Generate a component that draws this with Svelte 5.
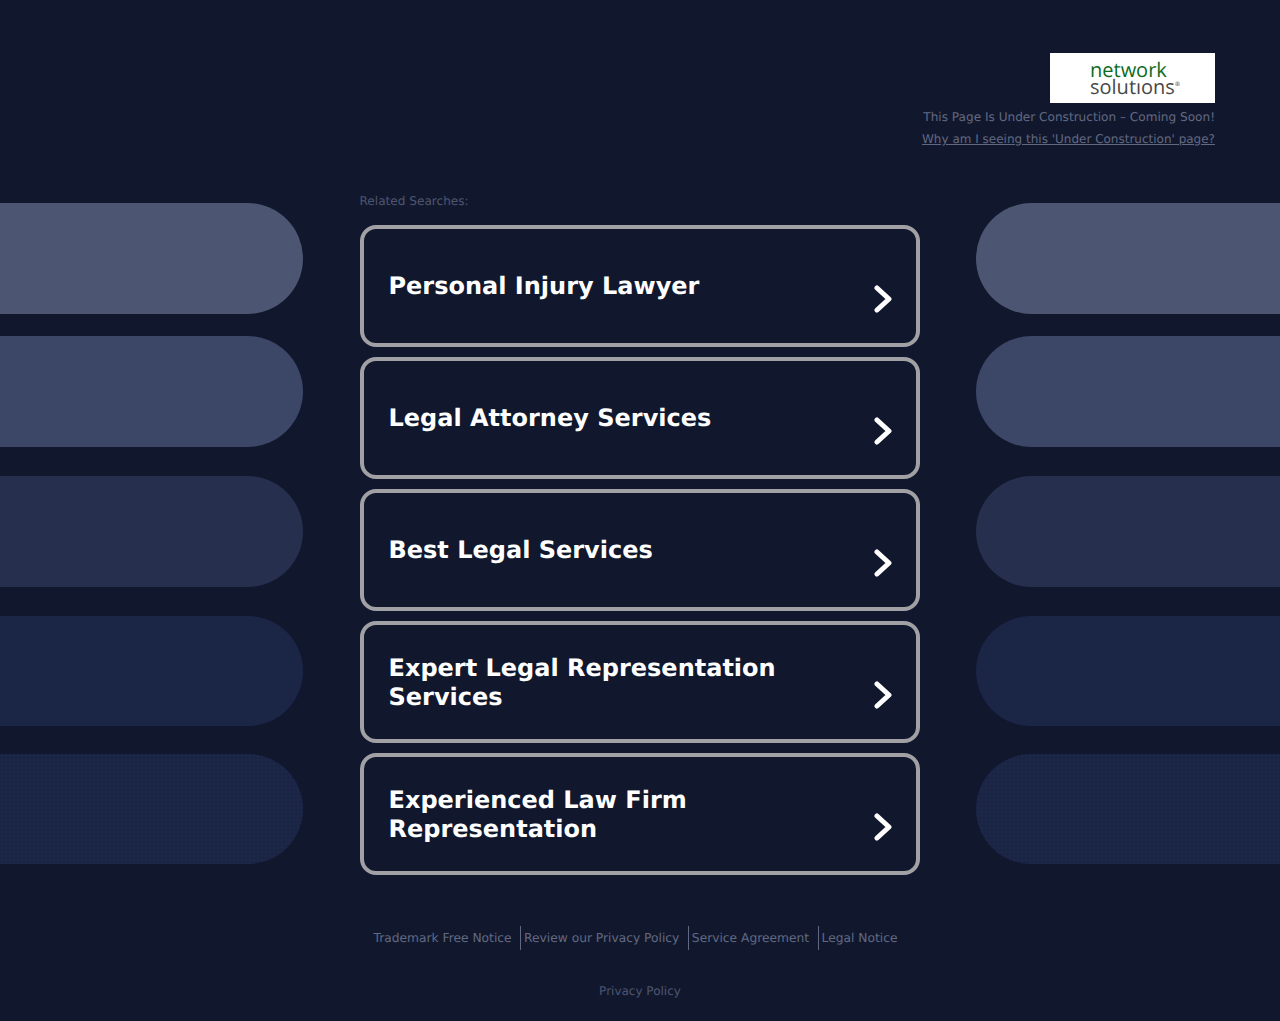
<script>
  const pills = ['p1', 'p2', 'p3', 'p4', 'p5'];
  const searches = [
    'Personal Injury Lawyer',
    'Legal Attorney Services',
    'Best Legal Services',
    'Expert Legal Representation Services',
    'Experienced Law Firm Representation'
  ];
  const links = ['Trademark Free Notice', 'Review our Privacy Policy', 'Service Agreement', 'Legal Notice'];
</script>

<div class="page">
  <header class="top">
    <div class="logo">
      <span class="net">network</span>
      <span class="sol">solutıons<sup>®</sup></span>
    </div>
    <p class="soon">This Page Is Under Construction – Coming Soon!</p>
    <a class="why" href="#why">Why am I seeing this 'Under Construction' page?</a>
  </header>

  <main class="main">
    <div class="side left">
      {#each pills as p}<div class="pill {p}"></div>{/each}
    </div>
    <section class="center">
      <h2 class="related">Related Searches:</h2>
      <div class="list">
        {#each searches as s}
          <a class="item" href="#s">
            <span class="label">{s}</span>
            <svg class="chev" viewBox="0 0 20 28" width="20" height="28" aria-hidden="true">
              <path d="M4 3 L16 14 L4 25" fill="none" stroke="#fff" stroke-width="5" stroke-linecap="round" stroke-linejoin="round" />
            </svg>
          </a>
        {/each}
      </div>
    </section>
    <div class="side right">
      {#each pills as p}<div class="pill {p}"></div>{/each}
    </div>
  </main>

  <footer class="foot">
    <nav class="links">
      {#each links as l}<a href="#l">{l}</a>{/each}
    </nav>
    <a class="policy" href="#p">Privacy Policy</a>
  </footer>
</div>

<style>
  :global(body) {
    margin: 0;
    background: #11182d;
  }
  .page {
    height: 1021px;
    overflow: hidden;
    font-family: "DejaVu Sans", sans-serif;
    text-rendering: geometricPrecision;
    background: #11182d;
  }
  .top {
    display: flex;
    flex-direction: column;
    align-items: flex-end;
    padding: 53px 65px 0 0;
    height: 136px;
    box-sizing: content-box;
  }
  .logo {
    width: 165px;
    height: 50px;
    background: #fff;
    display: flex;
    flex-direction: column;
    box-sizing: border-box;
    padding: 8px 0 0 40px;
    font-family: "Open Sans", sans-serif;
    line-height: 17px;
  }
  .net {
    color: #0b6b22;
    font-size: 20px;
  }
  .sol {
    color: #484848;
    font-size: 20px;
  }
  .sol sup {
    font-size: 6px;
    line-height: 0;
    vertical-align: 8px;
  }
  .soon {
    margin: 7px 0 0;
    font-size: 12.1px;
    line-height: 14px;
    color: #616882;
  }
  .why {
    margin-top: 8px;
    font-size: 12px;
    line-height: 14px;
    color: #616882;
  }
  .main {
    display: grid;
    grid-template-columns: 303px 560px 304px;
    justify-content: space-between;
  }
  .side {
    padding-top: 14px;
  }
  .pill {
    height: 111px;
    margin-bottom: 22px;
  }
  .left .pill {
    border-radius: 0 56px 56px 0;
  }
  .right .pill {
    border-radius: 56px 0 0 56px;
  }
  .p1 { background: #4c5672; }
  .p2 { background: #3c4666; margin-bottom: 29px; }
  .p3 { background: #272f4e; margin-bottom: 29px; }
  .p4 { background: #1b2546; height: 110px; margin-bottom: 28px; }
  .p5 {
    background: #1a2444 radial-gradient(circle, #1e2949 1px, transparent 1px) 0 0 / 4px 4px;
    height: 110px;
  }
  .center {
    display: flex;
    flex-direction: column;
  }
  .related {
    margin: 0;
    padding-top: 5px;
    height: 31px;
    font-size: 12.1px;
    line-height: 14px;
    font-weight: 400;
    color: #4e556f;
  }
  .list {
    display: flex;
    flex-direction: column;
    gap: 10px;
  }
  .item {
    box-sizing: border-box;
    height: 122px;
    border: 4px solid #a1a1a5;
    border-radius: 16px;
    display: flex;
    align-items: center;
    position: relative;
    padding: 0 25px;
    text-decoration: none;
    color: #fff;
    background: #11182d;
  }
  .label {
    font-size: 24px;
    line-height: 29px;
    font-weight: 700;
    max-width: 430px;
    padding-top: 1px;
  }
  .chev {
    position: absolute;
    right: 23px;
    top: 56px;
  }
  .foot {
    display: flex;
    flex-direction: column;
    align-items: center;
    padding-top: 40px;
  }
  .links {
    display: flex;
    margin-left: -12px;
  }
  .links a {
    font-size: 12.25px;
    line-height: 24px;
    color: #616882;
    text-decoration: none;
    padding: 0 8.5px 0 3px;
    border-right: 1px solid #616882;
  }
  .links a:last-child {
    border-right: 0;
    padding-right: 0;
  }
  .policy {
    margin-top: 34px;
    font-size: 12px;
    line-height: 14px;
    color: #4e556f;
    text-decoration: none;
  }
</style>
